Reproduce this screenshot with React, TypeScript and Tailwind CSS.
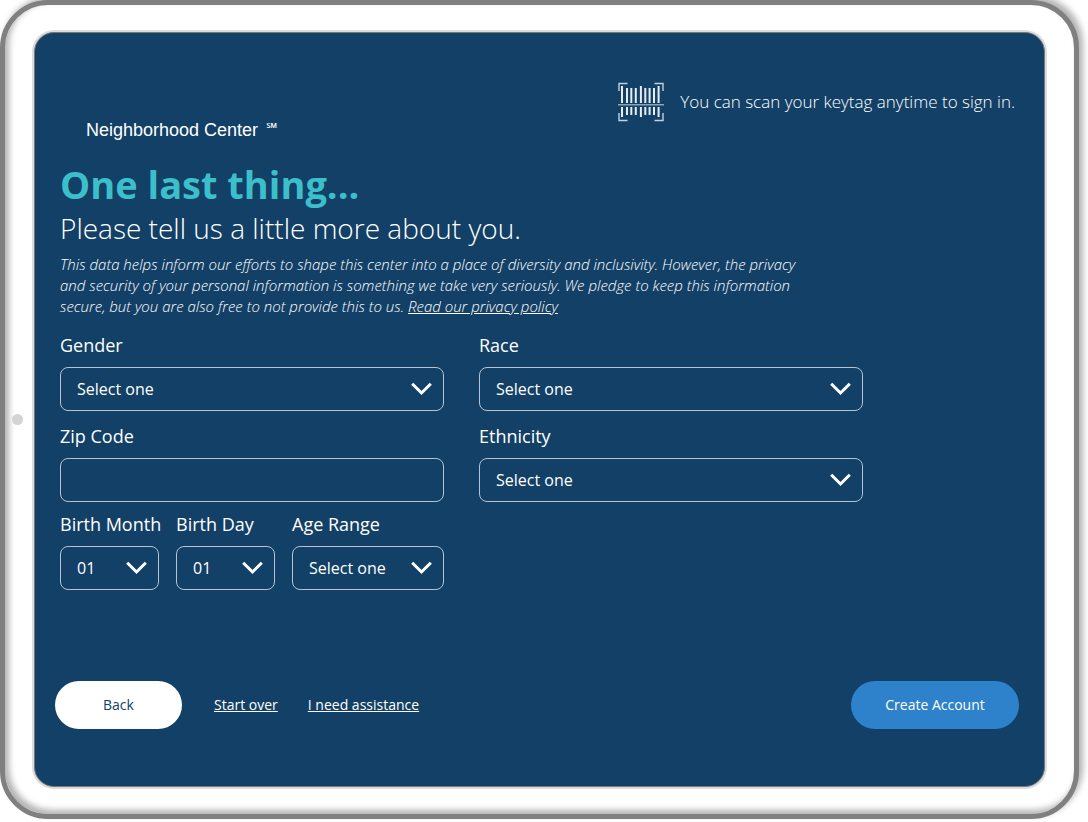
import type { ReactNode } from "react";

function Chevron() {
  return (
    <svg
      aria-hidden="true"
      viewBox="0 0 22 14"
      className="pointer-events-none absolute top-[15px] right-[11px] h-[14px] w-[22px]"
      fill="none"
      stroke="white"
      strokeWidth="3"
    >
      <path d="M1.2 1.7 L10.5 11 L19.8 1.7" />
    </svg>
  );
}

function Field({ id, label, children }: { id: string; label: string; children: ReactNode }) {
  return (
    <div className="flex min-w-0 flex-col gap-2">
      <label htmlFor={id} className="text-lg leading-7 whitespace-nowrap">
        {label}
      </label>
      {children}
    </div>
  );
}

function SelectField({ id, label, options }: { id: string; label: string; options: string[] }) {
  return (
    <Field id={id} label={label}>
      <div className="relative">
        <select
          id={id}
          className="h-11 w-full appearance-none rounded-lg border border-[#b5c4d1] bg-transparent pl-4 text-base text-white"
        >
          {options.map((option) => (
            <option key={option} className="text-black">
              {option}
            </option>
          ))}
        </select>
        <Chevron />
      </div>
    </Field>
  );
}

function BarcodeIcon() {
  const bars = [
    { x: 4, tall: true },
    { x: 9, tall: false },
    { x: 13.3, tall: false },
    { x: 17.8, tall: false },
    { x: 22.9, tall: true },
    { x: 27.3, tall: false },
    { x: 31.6, tall: false },
    { x: 36, tall: false },
    { x: 40.6, tall: true },
  ];
  return (
    <svg aria-hidden="true" viewBox="0 0 46 40" className="h-10 w-[46px] shrink-0" fill="none">
      <path
        d="M1 9V1.5H9.5M36.5 1.5H45V9M1 31V38.5H9.5M36.5 38.5H45V31"
        stroke="#c3d0da"
        strokeWidth="1.4"
      />
      <path d="M0 22.8H46" stroke="#8ca3b7" strokeWidth="1.5" />
      {bars.map((bar) => (
        <path
          key={bar.x}
          d={bar.tall ? `M${bar.x} 4V21M${bar.x} 25V35` : `M${bar.x} 6V21M${bar.x} 25V33`}
          stroke="#e6ecf1"
          strokeWidth="2"
        />
      ))}
    </svg>
  );
}

const days = Array.from({ length: 31 }, (_, i) => String(i + 1).padStart(2, "0"));

export default function App() {
  return (
    <div className="min-h-screen bg-white pr-[9px] pb-[3px] font-['Open_Sans',sans-serif]">
      <div className="relative flex min-h-[819px] rounded-[48px] border-[5px] border-[#808080] bg-white px-[29px] py-[27px] shadow-[4px_-4px_6px_rgba(0,0,0,0.3),inset_4px_-4px_6px_rgba(0,0,0,0.3)]">
        <span className="absolute top-[409px] left-[7px] size-[11px] rounded-full bg-[#d3d3d3]" />
        <main className="flex flex-1 flex-col rounded-[20px] border border-[#777] bg-[#134066] px-[25px] pt-[49px] pb-[57px] text-white shadow-[0_0_0_2px_#dcdcdc]">
          <header className="flex items-end justify-between">
            <p className="flex items-start gap-2 pl-[26px] font-['Liberation_Sans',sans-serif] text-lg leading-5">
              Neighborhood Center <span className="text-sm leading-4">℠</span>
            </p>
            <p className="mb-[18px] flex items-center gap-4 pr-1 text-[17px] font-light">
              <BarcodeIcon />
              You can scan your keytag anytime to sign in.
            </p>
          </header>

          <h1 className="mt-5 text-[38px] leading-[48px] font-bold text-[#3cbecb]">One last thing...</h1>
          <p className="text-[28px] leading-10 font-light">Please tell us a little more about you.</p>
          <p className="mt-[6px] max-w-[760px] text-[15px] leading-[21px] font-light italic">
            This data helps inform our efforts to shape this center into a place of diversity and inclusivity. However,
            the privacy and security of your personal information is something we take very seriously. We pledge to keep
            this information secure, but you are also free to not provide this to us.{" "}
            <a href="#privacy" className="underline">
              Read our privacy policy
            </a>
          </p>

          <form id="details" className="mt-[14px] grid max-w-[803px] grid-cols-2 gap-x-[35px] gap-y-[11px]">
            <SelectField id="gender" label="Gender" options={["Select one", "Female", "Male", "Non-binary"]} />
            <SelectField id="race" label="Race" options={["Select one", "Other"]} />
            <Field id="zip" label="Zip Code">
              <input
                id="zip"
                type="text"
                className="h-11 w-full rounded-lg border border-[#b5c4d1] bg-transparent px-4 text-base text-white"
              />
            </Field>
            <SelectField id="ethnicity" label="Ethnicity" options={["Select one", "Other"]} />
            <div className="-mt-[3px] grid grid-cols-[99px_99px_1fr] gap-x-[17px]">
              <SelectField id="month" label="Birth Month" options={days.slice(0, 12)} />
              <SelectField id="day" label="Birth Day" options={days} />
              <SelectField id="age" label="Age Range" options={["Select one", "18–24", "25–44", "45–64", "65+"]} />
            </div>
          </form>

          <footer className="mt-auto -ml-[5px] flex items-center text-sm">
            <button type="button" className="h-12 w-[127px] rounded-full bg-white text-[#134066]">
              Back
            </button>
            <a href="#start" className="ml-8 underline">
              Start over
            </a>
            <a href="#help" className="ml-[30px] underline">
              I need assistance
            </a>
            <button type="submit" form="details" className="ml-auto h-12 w-[168px] rounded-full bg-[#2d82cb]">
              Create Account
            </button>
          </footer>
        </main>
      </div>
    </div>
  );
}
